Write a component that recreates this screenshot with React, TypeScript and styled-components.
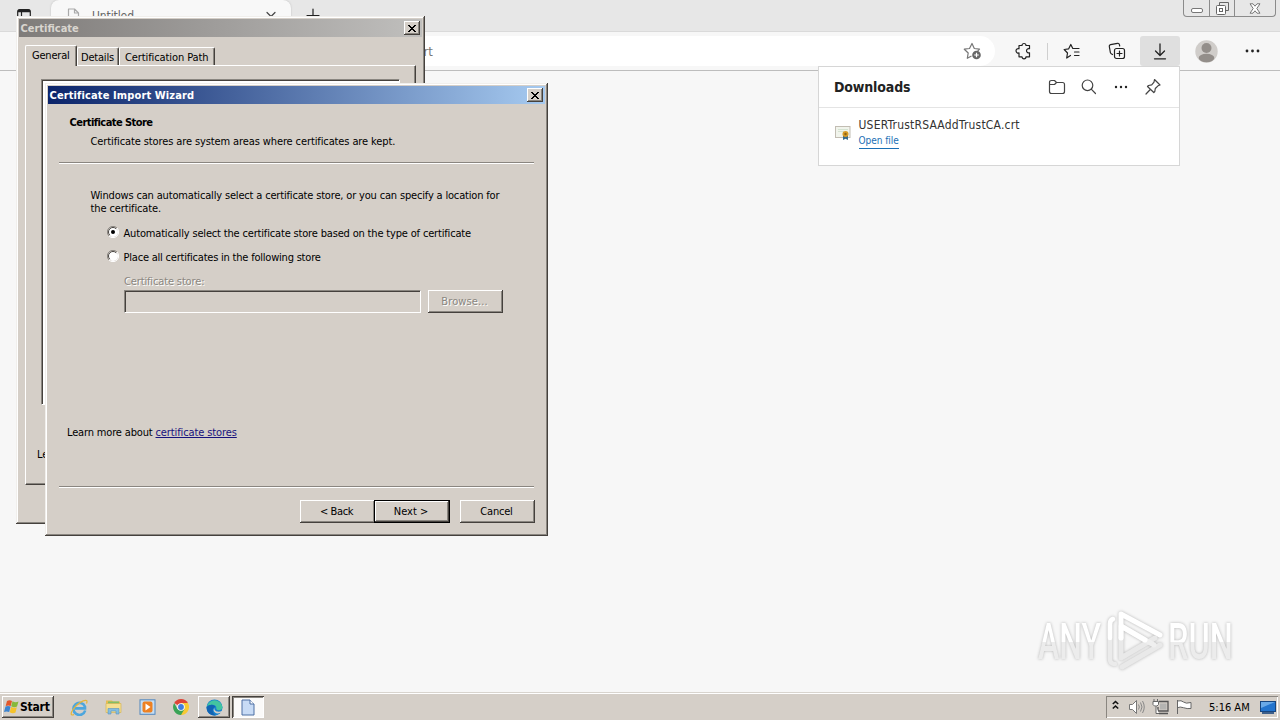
import React from "react";
import styled, { createGlobalStyle, css } from "styled-components";

const Global = createGlobalStyle`
  * { box-sizing: border-box; }
  html, body { margin: 0; padding: 0; }
  body { width: 1280px; height: 720px; overflow: hidden; }
  svg { display: block; flex: none; }
`;

const face = "#d5cfc8";
const ui = `"DejaVu Sans Condensed", "DejaVu Sans", sans-serif`;

const Desktop = styled.div`
  position: relative;
  display: flex;
  flex-direction: column;
  width: 1280px;
  height: 720px;
  overflow: hidden;
  background: #f7f7f7;
  font: 11px/13px ${ui};
  font-stretch: condensed;
  color: #000;
`;

const Label = styled.span<{ $ls?: number; $size?: number; $bold?: boolean; $color?: string }>`
  white-space: nowrap;
  letter-spacing: ${(p) => p.$ls ?? 0}px;
  font-size: ${(p) => p.$size ?? 11}px;
  font-weight: ${(p) => (p.$bold ? 700 : 400)};
  color: ${(p) => p.$color ?? "inherit"};
`;

/* ---------- browser ---------- */
const TabStrip = styled.div`
  display: flex;
  height: 32px;
  background: #e7e7e7;
  border-bottom: 1px solid #dadada;
`;
const TabMenu = styled.div`
  width: 51px;
  padding: 8px 0 0 17px;
`;
const Tab = styled.div`
  display: flex;
  width: 240px;
  height: 32px;
  padding: 8px 13px 0 16px;
  background: #f8f8f8;
  border-radius: 8px 8px 0 0;
  box-shadow: 0 0 2px #bbb;
`;
const TabTitle = styled.div`
  flex: 1;
  padding: 2px 0 0 11px;
`;
const NewTab = styled.div`
  padding: 8px 0 0 15px;
`;
const CaptionButtons = styled.div`
  display: flex;
  width: 93px;
  height: 17px;
  margin: 0 4px 0 auto;
  border: 1px solid #8b8b8b;
  border-top: 0;
  border-radius: 0 0 4px 4px;
`;
const CaptionButton = styled.div<{ $w: number }>`
  display: flex;
  align-items: center;
  justify-content: center;
  width: ${(p) => p.$w}px;
  & + & { border-left: 1px solid #8b8b8b; }
`;
const Toolbar = styled.div`
  display: flex;
  align-items: center;
  height: 39px;
  background: #f7f7f7;
  border-bottom: 1px solid #bdbdbd;
`;
const AddressBar = styled.div`
  display: flex;
  align-items: center;
  justify-content: space-between;
  width: 895px;
  height: 30px;
  margin-left: 100px;
  padding: 0 13px 0 317px;
  background: #fff;
  border-radius: 15px;
`;
const ToolSlot = styled.div<{ $w: number; $active?: boolean; $padL?: number; $padR?: number }>`
  display: flex;
  align-items: center;
  justify-content: center;
  width: ${(p) => p.$w}px;
  height: 30px;
  padding: 0 ${(p) => p.$padR ?? 0}px 0 ${(p) => p.$padL ?? 0}px;
  border-radius: 3px;
  background: ${(p) => (p.$active ? "#dfdfdf" : "transparent")};
`;
const Rule = styled.div`
  width: 1px;
  height: 17px;
  background: #cfcfcf;
`;

/* ---------- downloads flyout ---------- */
const Flyout = styled.section`
  position: absolute;
  left: 818px;
  top: 66px;
  width: 362px;
  height: 100px;
  background: #fff;
  border: 1px solid #d6d6d6;
`;
const FlyoutHead = styled.header`
  display: flex;
  align-items: center;
  height: 41px;
  padding: 0 17px 0 15px;
  border-bottom: 1px solid #e4e4e4;
`;
const FlyoutTitle = styled.div`
  flex: 1;
  padding-top: 1px;
`;
const FlyoutTools = styled.div`
  display: flex;
  align-items: center;
  gap: 14px;
`;
const FileRow = styled.div`
  display: flex;
  padding: 10px 0 0 16px;
  gap: 7.5px;
`;
const FileIcon = styled.div`padding-top: 7px;`;
const FileText = styled.div`
  display: flex;
  flex-direction: column;
  align-items: flex-start;
  line-height: 15px;
`;
const OpenLink = styled.a`
  height: 15px;
  margin-top: 1px;
  line-height: 13px;
  color: #1a6fb5;
  border-bottom: 1px solid #1a6fb5;
`;

/* ---------- classic windows ---------- */
const raised = css`
  box-shadow: inset -1px -1px #45413d, inset 1px 1px #f1efec, inset -2px -2px #8a8680, inset 2px 2px #fff;
`;
const Win = styled.section<{ $x: number; $y: number; $w: number; $h: number }>`
  position: absolute;
  left: ${(p) => p.$x}px;
  top: ${(p) => p.$y}px;
  width: ${(p) => p.$w}px;
  height: ${(p) => p.$h}px;
  padding: 3px;
  background: ${face};
  overflow: hidden;
  ${raised}
`;
const TitleBar = styled.header<{ $from: string; $to: string }>`
  display: flex;
  align-items: center;
  justify-content: space-between;
  height: 18px;
  padding: 0 2px 0 1.5px;
  background: linear-gradient(90deg, ${(p) => p.$from}, ${(p) => p.$to});
`;
const CloseBox = styled.button`
  display: flex;
  align-items: center;
  justify-content: center;
  width: 16px;
  height: 14px;
  padding: 0;
  border: 0;
  background: ${face};
  box-shadow: inset -1px -1px #45413d, inset 1px 1px #fff, inset -2px -2px #8a8680;
`;
const Tabs = styled.div`
  display: flex;
  align-items: flex-end;
  height: 28px;
  margin-left: 6px;
`;
const SheetTab = styled.div<{ $w: number; $on?: boolean; $inset?: number }>`
  position: relative;
  z-index: ${(p) => (p.$on ? 1 : 0)};
  width: ${(p) => p.$w}px;
  height: ${(p) => (p.$on ? 21 : 18)}px;
  padding: 3px 0 0 ${(p) => p.$inset ?? 4}px;
  margin-bottom: ${(p) => (p.$on ? -1 : 0)}px;
  background: ${face};
  border-radius: 2px 2px 0 0;
  border-top: 1px solid #fff;
  border-left: 1px solid #fff;
  border-right: 1px solid #45413d;
  box-shadow: inset -1px 0 #8a8680;
`;
const Sheet = styled.div`
  width: 391px;
  height: 420px;
  margin-left: 6px;
  padding: 13px 15px;
  border: 1px solid;
  border-color: #fff #45413d #45413d #fff;
  box-shadow: inset -1px -1px #8a8680;
`;
const CertPane = styled.div`
  width: 359px;
  height: 326px;
  border: 1px solid;
  border-color: #8a8680 #fff #fff #8a8680;
  box-shadow: inset 1px 1px #45413d;
  background: #fff;
`;
const SheetNote = styled.p`
  margin: 43px 0 0 -4px;
`;
const WizardHead = styled.div`
  display: flex;
  flex-direction: column;
  gap: 6px;
  padding: 12px 0 0 21.5px;
  height: 58px;
`;
const Indent = styled.div`padding-left: 21px;`;
const Groove = styled.hr`
  width: 475px;
  height: 2px;
  margin: 0 0 0 11px;
  border: 0;
  border-top: 1px solid #8a8680;
  border-bottom: 1px solid #fff;
`;
const WizardBody = styled.div`
  height: 322px;
  padding: 25px 0 0 42.5px;
`;
const Paragraph = styled.p`
  display: flex;
  flex-direction: column;
  margin: 0 0 11px;
`;
const Choice = styled.div`
  display: flex;
  align-items: center;
  gap: 4.5px;
  height: 14px;
  margin: 0 0 10px 16.5px;
  svg { margin-bottom: 2px; }
`;
const StoreField = styled.div`
  display: flex;
  flex-direction: column;
  gap: 2px;
  margin-top: 11px;
  padding-left: 33.5px;
  color: #8a8680;
  text-shadow: 1px 1px #fff;
`;
const FieldRow = styled.div`
  display: flex;
  gap: 7px;
`;
const TextBox = styled.div`
  width: 297px;
  height: 23px;
  border: 1px solid;
  border-color: #8a8680 #fff #fff #8a8680;
  box-shadow: inset 1px 1px #45413d;
`;
const PushButton = styled.button<{ $default?: boolean; $off?: boolean }>`
  width: ${(p) => (p.$default ? 76 : 75)}px;
  height: 23px;
  padding: 0 2px 0 0;
  text-align: center;
  font: inherit;
  background: ${face};
  color: ${(p) => (p.$off ? "#8a8680" : "#000")};
  text-shadow: ${(p) => (p.$off ? "1px 1px #fff" : "none")};
  border: ${(p) => (p.$default ? "1px solid #000" : "0")};
  box-shadow: inset -1px -1px #45413d, inset 1px 1px #fff, inset -2px -2px #8a8680;
`;
const LearnMore = styled.p`
  margin: 113px 0 0 -23.5px;
  display: flex;
  gap: 3px;
`;
const HelpLink = styled.a`
  color: #17127e;
  text-decoration: underline;
`;
const WizardFoot = styled.footer`
  display: flex;
  justify-content: flex-end;
  padding: 12px 10px 0 0;
`;
const CancelSlot = styled.div`margin-left: 10px;`;
const NextSlot = styled.div`margin-left: -1px; position: relative;`;

/* ---------- taskbar ---------- */
const Taskbar = styled.footer`
  display: flex;
  align-items: center;
  height: 28px;
  margin-top: auto;
  padding: 2px 2px 1px 2px;
  background: ${face};
  border-top: 1px solid #d8d4ce;
  box-shadow: inset 0 1px #fff;
`;
const StartButton = styled.div`
  display: flex;
  align-items: center;
  gap: 1px;
  width: 52px;
  height: 22px;
  padding-left: 2px;
  box-shadow: inset -1px -1px #45413d, inset 1px 1px #fff, inset -2px -2px #8a8680;
`;
const TaskSlot = styled.div<{ $w: number; $state?: "up" | "down" }>`
  display: flex;
  align-items: center;
  justify-content: center;
  width: ${(p) => p.$w}px;
  height: 22px;
  ${(p) => p.$state === "up" && css`box-shadow: inset -1px -1px #45413d, inset 1px 1px #fff, inset -2px -2px #8a8680;`}
  ${(p) => p.$state === "down" && css`background: #fbfaf9; box-shadow: inset 1px 1px #45413d, inset -1px -1px #fff, inset 2px 2px #8a8680;`}
`;
const RunningTasks = styled.div`
  display: flex;
  gap: 2px;
`;
const QuickLaunch = styled.div`
  display: flex;
  margin-left: 8px;
`;
const Tray = styled.div`
  display: flex;
  align-items: center;
  width: 172px;
  height: 22px;
  margin-left: auto;
  padding-left: 5px;
  box-shadow: inset 1px 1px #8a8680, inset -1px -1px #fff;
`;
const Clock = styled.div`
  margin-left: 14px;
  width: 51px;
`;

const Watermark = styled.div`
  position: absolute;
  left: 1038px;
  top: 610px;
  display: flex;
  align-items: center;
  height: 62px;
  filter: drop-shadow(0 0 1.5px #b4b4b4);
`;
const MarkWord = styled.div<{ $w: number }>`
  width: ${(p) => p.$w}px;
  padding-top: 1px;
  font: 500 50px/62px "Roboto", sans-serif;
  white-space: nowrap;
`;
const Squeeze = styled.span<{ $k: number }>`
  display: inline-block;
  transform: scaleX(${(p) => p.$k});
  transform-origin: 0 50%;
  color: transparent;
  background: linear-gradient(#fff 50%, #ececec 50%);
  background-clip: text;
  -webkit-background-clip: text;
`;

/* ---------- icons ---------- */
const Line = ({ w, h = w, d, sw = 1.2, c = "#222" }: { w: number; h?: number; d: string; sw?: number; c?: string }) => (
  <svg width={w} height={h} viewBox={`0 0 ${w} ${h}`} fill="none" stroke={c} strokeWidth={sw} strokeLinecap="round" strokeLinejoin="round">
    <path d={d} />
  </svg>
);
const CloseGlyph = () => (
  <svg width="8" height="7" viewBox="0 0 8 7" shapeRendering="crispEdges">
    <path d="M0 0h2v1h1v1h2v-1h1v-1h2v1h-1v1h-1v1h-1v1h1v1h1v1h1v1h-2v-1h-1v-1h-2v1h-1v1h-2v-1h1v-1h1v-1h1v-1h-1v-1h-1v-1h-1z" fill="#000" />
  </svg>
);
const Radio = ({ on }: { on?: boolean }) => (
  <svg width="12" height="12" viewBox="0 0 12 12">
    <circle cx="6" cy="6" r="5" fill="#fff" />
    <path d="M2 10A5.5 5.5 0 0 1 10 2" fill="none" stroke="#8a8680" />
    <path d="M2.8 9.2A4.5 4.5 0 0 1 9.2 2.8" fill="none" stroke="#45413d" />
    <path d="M2 10A5.5 5.5 0 0 0 10 2" fill="none" stroke="#fff" />
    {on && <circle cx="6" cy="6" r="2" fill="#000" />}
  </svg>
);
const Dots = ({ w = 14, r = 1.2, span = w }: { w?: number; r?: number; span?: number }) => (
  <svg width={w} height="4" viewBox={`0 0 ${w} 4`} fill="#222">
    <circle cx={(w - span) / 2 + 2} cy="2" r={r} /><circle cx={w / 2} cy="2" r={r} /><circle cx={(w + span) / 2 - 2} cy="2" r={r} />
  </svg>
);
const AddFavourite = () => (
  <svg width="19" height="18" viewBox="0 0 19 18" fill="none" stroke="#777" strokeWidth="1.2" strokeLinejoin="round">
    <path d="M8.500 14l-4.200 2.300 .9-5.300-3.900-3.800 5.200-.7L9 1.500l2.300 5 5.200.7-1.800 1.800" />
    <circle cx="13.500" cy="13" r="4.300" fill="#666" stroke="none" />
    <path d="M13.500 10.700v4.600M11.200 13h4.600" stroke="#fff" />
  </svg>
);
const Collections = () => (
  <svg width="18" height="18" viewBox="0 0 18 18" fill="none" stroke="#222" strokeWidth="1.200" strokeLinejoin="round" strokeLinecap="round">
    <rect x="6.500" y="6.500" width="10" height="10" rx="2" />
    <path d="M11.500 9v5M9 11.500h5M4.500 12.500 3.300 11.800Q2.600 11.300 2.400 10.600L1.300 4.500Q1 3 2.500 2.600L9.500 1.300Q11 1 11.400 2.600L11.700 4" />
  </svg>
);
const Avatar = () => (
  <svg width="23" height="23" viewBox="0 0 23 23">
    <circle cx="11.500" cy="11.500" r="11.200" fill="#d0cdca" />
    <circle cx="11.500" cy="8" r="5" fill="#938e8a" />
    <ellipse cx="11.500" cy="18" rx="7.800" ry="4.200" fill="#938e8a" />
  </svg>
);
const CertIcon = () => (
  <svg width="16" height="16" viewBox="0 0 16 16">
    <rect x=".5" y="1.500" width="14.500" height="11" fill="#f1f4ec" stroke="#c2bdb3" />
    <path d="M3 4.500h10M3 6.500h6" stroke="#d5e3d2" />
    <path d="M8 10v5l2.500-1.300L13 15V10z" fill="#356a8e" />
    <circle cx="10.500" cy="9" r="3" fill="#d79a25" /><circle cx="10.500" cy="9" r="1.200" fill="#8e6212" />
  </svg>
);
const Flag = () => (
  <svg width="15" height="16" viewBox="0 0 15 16">
    <path d="M3 2Q5.500.5 8 2L6.700 7Q4.500 5.800 1.700 7z" fill="#e2572a" />
    <path d="M8.500 2.300Q11.500 4 14.500 2.500L13 7.500Q10.500 9 7.200 7.300z" fill="#86b93b" />
    <path d="M1.500 7.500Q4 6.300 6.600 7.500L5.200 13Q2.500 11.800 0 13z" fill="#3c84cf" />
    <path d="M7.100 8Q10 9.500 12.800 8.200L11.500 13.500Q9 15 5.700 13.300z" fill="#f5c32c" />
  </svg>
);
const Explorer = () => (
  <svg width="18" height="17" viewBox="0 0 18 17" fill="none">
    <path d="M15.200 11.500A6 6 0 1 1 15 7.700v1.700H5" stroke="#4da6dd" strokeWidth="2.600" />
    <path d="M4 15.500C1 17 0 15 3 10.500 7 4.500 14 .5 16.500 1.500q1 .6 0 3" stroke="#e5b539" strokeWidth="1.200" />
  </svg>
);
const Folder = () => (
  <svg width="17" height="16" viewBox="0 0 17 16">
    <path d="M1 3.500V1.500h6l1 1h7v3H1z" fill="#e7bd52" />
    <rect x="3" y="2.500" width="11" height="5" fill="#82bd66" />
    <path d="M1 4.500h15v9H1z" fill="#f5df91" stroke="#d5b458" strokeWidth=".7" />
    <path d="M3 15V9.500h11V15h-3v-3H6v3z" fill="#84bde0" stroke="#5a93bd" strokeWidth=".6" />
  </svg>
);
const Player = () => (
  <svg width="17" height="16" viewBox="0 0 17 16">
    <rect x="1" y=".8" width="15" height="14.500" fill="#c6def3" stroke="#5387bd" />
    <rect x="3.500" y="2.500" width="10" height="11" rx="2" fill="#ed8123" />
    <path d="M6.500 4.500v7l5-3.500z" fill="#fff" />
  </svg>
);
const Chrome = () => (
  <svg width="16" height="16" viewBox="0 0 16 16">
    <path d="M8 8 1.200 4A7.900 7.900 0 0 1 14.900 4z" fill="#dd4437" />
    <path d="M8 8V4h6.900A7.900 7.900 0 0 1 8 15.900z" fill="#f7c934" />
    <path d="M8 8 4.500 10 1.200 4A7.900 7.900 0 0 0 8 15.900L11.500 10z" fill="#3aa356" />
    <circle cx="8" cy="8" r="3.800" fill="#fff" /><circle cx="8" cy="8" r="2.900" fill="#3f7de0" />
  </svg>
);
const Edge = () => (
  <svg width="17" height="17" viewBox="0 0 17 17">
    <circle cx="8.500" cy="8.500" r="8" fill="#1783cf" />
    <path d="M.7 8A8 8 0 0 1 16.500 8C16.500 12 10.500 12 10.300 9.500 11.500 6 4 4 .7 8z" fill="#43c5a0" />
    <path d="M.6 8C4 4.300 9 5.500 9.300 8 5.500 8.500 6 14.500 10 16.400 4 17.200.3 13 .6 8z" fill="#1264b3" />
    <path d="M8.500 8.500C7.500 12 11.500 13.500 15.500 12.200L17 10.500V13L14 14C11 15 8 14 7.500 11z" fill="#d5cfc8" />
  </svg>
);
const PageIcon = () => (
  <svg width="14" height="17" viewBox="0 0 14 17">
    <path d="M1 1h8l4 4v11H1z" fill="#c8dbf5" stroke="#4d6fa3" strokeLinejoin="round" />
    <path d="M9 1v4h4" fill="#fff" stroke="#4d6fa3" strokeLinejoin="round" />
  </svg>
);
const TrayIcons = () => (
  <svg width="84" height="18" viewBox="0 0 84 18" fill="none">
    <path d="M1.800 6l2.700-2.500L7.200 6M1.800 10.500l2.700-2.500 2.700 2.500" stroke="#111" strokeWidth="1.600" />
    <path d="M18.500 6.500h3l4-4v13l-4-4h-3z" fill="#fff" stroke="#777" />
    <path d="M27.500 6.500q1.700 2.500 0 5M29.500 4.500q3 4.500 0 9M31.500 3q3.500 6 0 12" stroke="#888" />
    <path d="M48 3.500h9v9.500H47V9M48 15.500h9" stroke="#555" strokeWidth="1.300" />
    <rect x="49" y="5.500" width="6.500" height="6" fill="#b4b4b2" />
    <path d="M43 1v3M46.500 1v3M42 3.500h5.500v3L46 8h-2.500L42 6.500zM45 8.500v7h3" fill="#fff" stroke="#666" />
    <path d="M66.500 2v14M66.500 3q4-1 6 1t7.500.5v6q-4 .5-7.500-.8t-6 0" fill="#fff" stroke="#666" />
  </svg>
);
const Monitor = () => (
  <svg width="16" height="15" viewBox="0 0 16 15">
    <rect x=".5" y="1.500" width="15" height="10" fill="#2374cd" stroke="#16457f" />
    <path d="M1 2h14L1 8z" fill="#69a9e7" /><rect x="2" y="12" width="12" height="2" fill="#3d5f8a" />
  </svg>
);
const PlayMark = () => (
  <svg width="62" height="62" viewBox="-1 0 62 62" fill="none" strokeLinejoin="round" strokeLinecap="round">
    <path d="M6 9q-3 1-3 5v35q0 5 5 5" stroke="#ebebeb" strokeWidth="4.500" />
    <path d="M6 9q-3 1-3 5v14" stroke="#fff" strokeWidth="4.500" />
    <path d="M14 28v20L48 28M15 57L53 35" stroke="#e9e9e9" strokeWidth="5" />
    <path d="M14 28V16L47 35" stroke="#efefef" strokeWidth="5" />
    <path d="M14 28V4L53 25M14 16L38 30" stroke="#fff" strokeWidth="5" />
  </svg>
);

export default function App() {
  return (
    <Desktop>
      <Global />
      <TabStrip>
        <TabMenu>
          <svg width="14" height="14" viewBox="0 0 14 14" fill="none" stroke="#222" strokeWidth="1.200">
            <rect x=".7" y="1.500" width="12.600" height="12" rx="2" /><path d="M1 3h12" strokeWidth="2.500" /><path d="M4.500 4v9" />
          </svg>
        </TabMenu>
        <Tab>
          <Line w={14} h={16} d="M1.500 1h6l4 4v10h-10zM7.500 1v4h4" c="#aaa" />
          <TabTitle><Label $size={12} $ls={-0.1} $color="#666">Untitled</Label></TabTitle>
          <Line w={14} h={14} d="M3 4.500l8 8M11 4.500l-8 8" c="#444" />
        </Tab>
        <NewTab><Line w={14} h={14} d="M7 1v12M1 7.500h12" c="#222" /></NewTab>
        <CaptionButtons>
          <CaptionButton $w={25}>
            <svg width="12" height="14" viewBox="0 0 12 14"><rect x=".5" y="7.500" width="11" height="4" rx="1.500" fill="#fff" stroke="#777" /></svg>
          </CaptionButton>
          <CaptionButton $w={25}>
            <svg width="13" height="13" viewBox="0 0 13 13" fill="none" stroke="#666"><path d="M3.500 3.500v-3h9v8h-3" /><rect x=".5" y="3.500" width="9" height="9" rx="1" fill="#fff" /><rect x="3.500" y="6.500" width="3" height="3" /></svg>
          </CaptionButton>
          <CaptionButton $w={41}>
            <svg width="12" height="11" viewBox="0 0 12 11"><path d="M1 .8h3l2 2.400L8 .8h3L7.800 5.500 11 10.200H8L6 7.800 4 10.200H1L4.200 5.500z" fill="#fff" stroke="#777" /></svg>
          </CaptionButton>
        </CaptionButtons>
      </TabStrip>
      <Toolbar>
        <AddressBar>
          <Label $size={13} $color="#777">crt</Label>
          <AddFavourite />
        </AddressBar>
        <ToolSlot $w={52} $padL={4}><Line w={17} h={18} sw={1.2} d="M4 3.500H7a2 2 0 0 1 4 0h3.500v3.200a2.200 2.200 0 1 0 0 4.100v4h-3.500a2 2 0 0 1-4 0H4v-3.900a2.200 2.200 0 1 1 0-4.100z" /></ToolSlot>
        <Rule />
        <ToolSlot $w={48}><Line w={18} h={17} sw={1.2} d="M7.500 12.500L3.700 15l.8-5L1.200 6.500l4.500-.7L7.800 1.500l2 4H16M11.500 9H16M11.500 12.500H16" /></ToolSlot>
        <ToolSlot $w={44} $padR={3}><Collections /></ToolSlot>
        <ToolSlot $w={40} $active><Line w={14} h={17} sw={1.3} d="M7 1v11M2.500 8L7 12.500 11.500 8M1.500 15.800h11" /></ToolSlot>
        <ToolSlot $w={52}><Avatar /></ToolSlot>
        <ToolSlot $w={40}><Dots w={15} r={1.4} /></ToolSlot>
      </Toolbar>

      <Flyout>
        <FlyoutHead>
          <FlyoutTitle><Label $size={14} $bold $ls={-0.15} $color="#222">Downloads</Label></FlyoutTitle>
          <FlyoutTools>
            <Line w={18} h={16} c="#444" d="M1.500 3.500q0-2 2-2h3l2 2h6q2 0 2 2v7q0 2-2 2h-11q-2 0-2-2zM1.500 5.500h5l2-2" />
            <Line w={18} h={18} c="#444" d="M7.500 2a5.300 5.300 0 1 1 0 10.600a5.300 5.300 0 1 1 0-10.600M11.500 11.300L15.500 15.500" />
            <Dots w={18} span={14} />
            <Line w={18} h={18} c="#444" d="M10.500 1.500l5.500 5.500-2 .8-2.700 2.700-.5 3-1 1L3.500 8.500l1-1 3.200-.6L10 4.200zM6.300 11.500L2 16" />
          </FlyoutTools>
        </FlyoutHead>
        <FileRow>
          <FileIcon><CertIcon /></FileIcon>
          <FileText>
            <Label $size={12} $ls={0.2} $color="#333">USERTrustRSAAddTrustCA.crt</Label>
            <OpenLink><Label $size={10} $ls={-0.05}>Open file</Label></OpenLink>
          </FileText>
        </FileRow>
      </Flyout>

      <Watermark>
        <MarkWord $w={68}><Squeeze $k={0.64}>ANY</Squeeze></MarkWord>
        <PlayMark />
        <MarkWord $w={70}><Squeeze $k={0.65}>RUN</Squeeze></MarkWord>
      </Watermark>

      <Win $x={16} $y={16} $w={409} $h={508}>
        <TitleBar $from="#7f7c7a" $to="#c0bfbd">
          <Label $bold $color="#d9d5cf">Certificate</Label>
          <CloseBox><CloseGlyph /></CloseBox>
        </TitleBar>
        <Tabs>
          <SheetTab $w={52} $on $inset={6}><Label $ls={-0.2}>General</Label></SheetTab>
          <SheetTab $w={42} $inset={3}><Label $ls={-0.2}>Details</Label></SheetTab>
          <SheetTab $w={96} $inset={5}><Label $ls={-0.1}>Certification Path</Label></SheetTab>
        </Tabs>
        <Sheet>
          <CertPane />
          <SheetNote><Label>Learn more about certificates</Label></SheetNote>
        </Sheet>
      </Win>

      <Win $x={45} $y={83} $w={503} $h={453}>
        <TitleBar $from="#0b246a" $to="#a6caf0">
          <Label $bold $ls={0.12} $color="#fff">Certificate Import Wizard</Label>
          <CloseBox><CloseGlyph /></CloseBox>
        </TitleBar>
        <WizardHead>
          <Label $bold $ls={-0.55}>Certificate Store</Label>
          <Indent><Label $ls={-0.11}>Certificate stores are system areas where certificates are kept.</Label></Indent>
        </WizardHead>
        <Groove />
        <WizardBody>
          <Paragraph>
            <Label $ls={-0.17}>Windows can automatically select a certificate store, or you can specify a location for</Label>
            <Label $ls={-0.12}>the certificate.</Label>
          </Paragraph>
          <Choice><Radio on /><Label $ls={-0.17}>Automatically select the certificate store based on the type of certificate</Label></Choice>
          <Choice><Radio /><Label $ls={-0.21}>Place all certificates in the following store</Label></Choice>
          <StoreField>
            <Label $ls={-0.14}>Certificate store:</Label>
            <FieldRow><TextBox /><PushButton $off><Label $ls={0.1}>Browse...</Label></PushButton></FieldRow>
          </StoreField>
          <LearnMore><Label $ls={-0.16}>Learn more about</Label><HelpLink><Label $ls={-0.11}>certificate stores</Label></HelpLink></LearnMore>
        </WizardBody>
        <Groove />
        <WizardFoot>
          <PushButton><Label $ls={-0.4}>&lt; Back</Label></PushButton>
          <NextSlot><PushButton $default><Label>Next &gt;</Label></PushButton></NextSlot>
          <CancelSlot><PushButton><Label $ls={-0.2}>Cancel</Label></PushButton></CancelSlot>
        </WizardFoot>
      </Win>

      <Taskbar>
        <StartButton><Flag /><Label $bold $size={12} $ls={-0.2}>Start</Label></StartButton>
        <QuickLaunch>
          <TaskSlot $w={34}><Explorer /></TaskSlot>
          <TaskSlot $w={34}><Folder /></TaskSlot>
          <TaskSlot $w={34}><Player /></TaskSlot>
          <TaskSlot $w={34}><Chrome /></TaskSlot>
        </QuickLaunch>
        <RunningTasks>
          <TaskSlot $w={32} $state="up"><Edge /></TaskSlot>
          <TaskSlot $w={32} $state="down"><PageIcon /></TaskSlot>
        </RunningTasks>
        <Tray>
          <TrayIcons />
          <Clock><Label>5:16 AM</Label></Clock>
          <Monitor />
        </Tray>
      </Taskbar>
    </Desktop>
  );
}
